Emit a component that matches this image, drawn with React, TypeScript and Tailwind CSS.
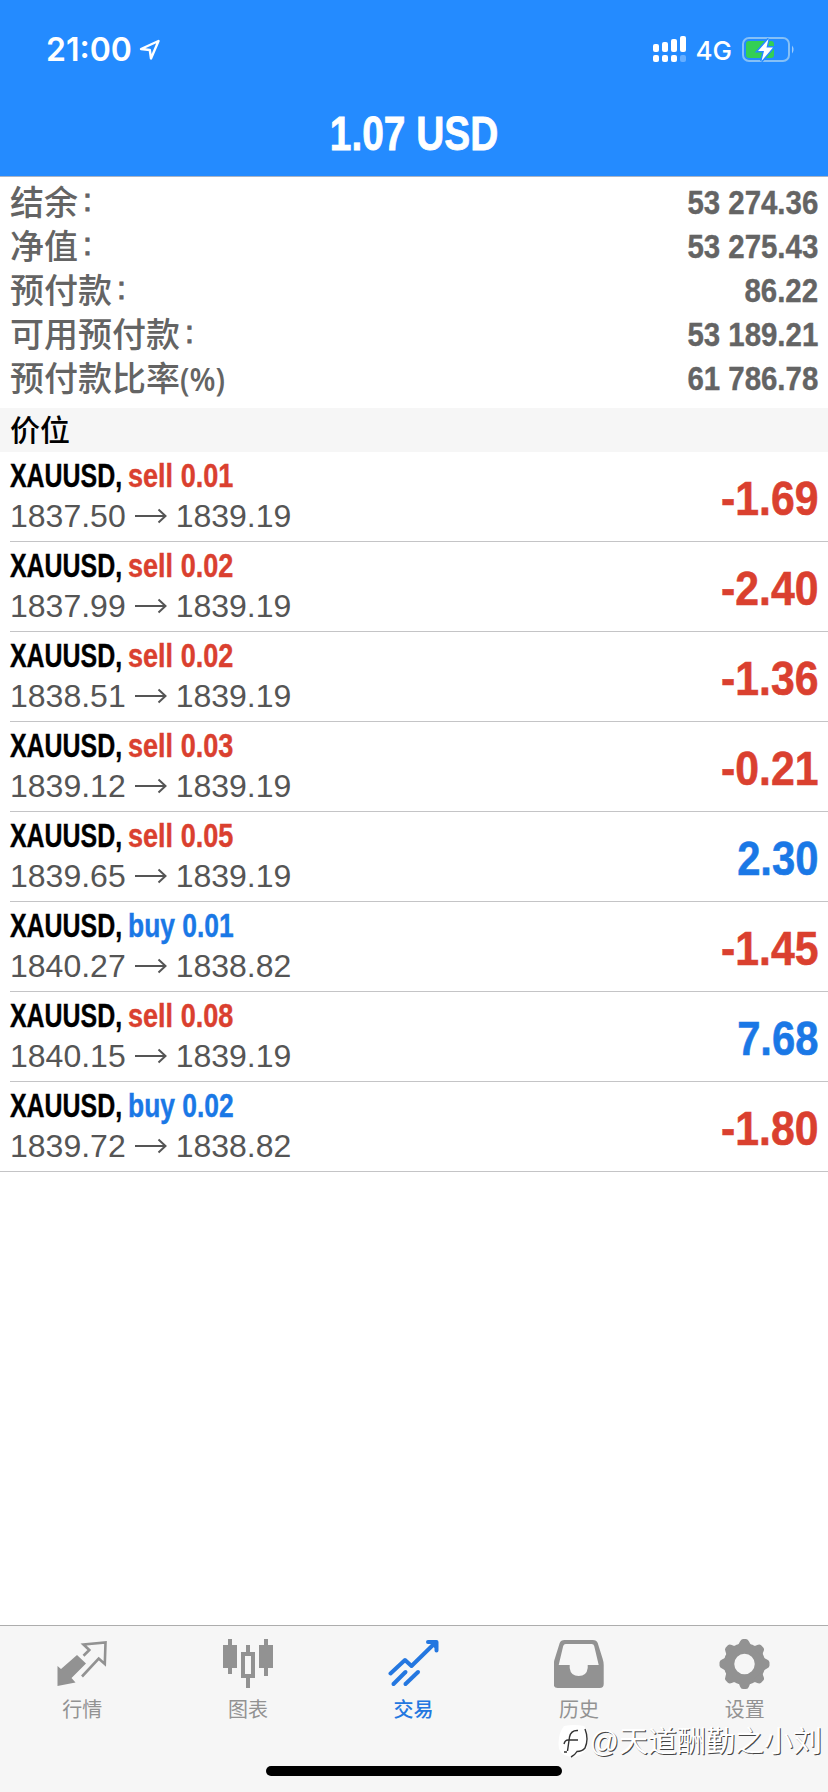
import type { ReactNode } from 'react';
import clsx from 'clsx';

const SUMMARY = [
  { label: '结余', suffix: ':', value: '53 274.36' },
  { label: '净值', suffix: ':', value: '53 275.43' },
  { label: '预付款', suffix: ':', value: '86.22' },
  { label: '可用预付款', suffix: ':', value: '53 189.21' },
  { label: '预付款比率', suffix: '(%)', value: '61 786.78' },
];

const POSITIONS = [
  { side: 'sell', volume: '0.01', open: '1837.50', current: '1839.19', profit: '-1.69' },
  { side: 'sell', volume: '0.02', open: '1837.99', current: '1839.19', profit: '-2.40' },
  { side: 'sell', volume: '0.02', open: '1838.51', current: '1839.19', profit: '-1.36' },
  { side: 'sell', volume: '0.03', open: '1839.12', current: '1839.19', profit: '-0.21' },
  { side: 'sell', volume: '0.05', open: '1839.65', current: '1839.19', profit: '2.30' },
  { side: 'buy', volume: '0.01', open: '1840.27', current: '1838.82', profit: '-1.45' },
  { side: 'sell', volume: '0.08', open: '1840.15', current: '1839.19', profit: '7.68' },
  { side: 'buy', volume: '0.02', open: '1839.72', current: '1838.82', profit: '-1.80' },
];

const RED = 'text-[#da402f]';
const BLUE = 'text-[#1a78e6]';

export default function App() {
  return (
    <div className="flex h-[1792px] w-[828px] flex-col overflow-hidden bg-white font-['Liberation_Sans','Noto_Sans_CJK_SC',sans-serif]">
      <header className="flex h-[177px] shrink-0 flex-col border-b border-[#a9b4c6] bg-[#248bff] text-white">
        <StatusBar />
        <h1 className="flex flex-1 justify-center pt-[9px] text-[48px] leading-[54px] font-bold">
          <span className="scale-x-[0.81] whitespace-nowrap [-webkit-text-stroke:0.8px_currentColor]">
            1.07 USD
          </span>
        </h1>
      </header>

      <section className="h-[231px] shrink-0 px-[10px] pt-[3px] text-[#646464]">
        {SUMMARY.map((row) => (
          <div key={row.label} className="flex h-[44px] items-center justify-between">
            <span className="flex items-center pt-[2px] text-[34px] leading-[44px] font-medium">
              {row.label}
              {row.suffix === ':' ? (
                <span className="ml-[5px] -translate-y-[3px] text-[32px] [-webkit-text-stroke:1px_currentColor]">
                  :
                </span>
              ) : (
                <span className="origin-left scale-x-[0.94] font-['Open_Sans',sans-serif] text-[32px] leading-[40px] font-semibold">
                  {row.suffix}
                </span>
              )}
            </span>
            <span className="origin-right scale-x-[0.865] text-[34px] leading-[44px] font-bold [-webkit-text-stroke:0.4px_currentColor]">
              {row.value}
            </span>
          </div>
        ))}
      </section>

      <h2 className="h-[44px] shrink-0 bg-[#f6f6f6] pl-[10px] text-[30px] leading-[46px] font-medium text-black">
        价位
      </h2>

      <main className="flex-1">
        {POSITIONS.map((p, i) => (
          <PositionRow key={i} position={p} last={i === POSITIONS.length - 1} />
        ))}
      </main>

      <TabBar />
    </div>
  );
}

function StatusBar() {
  return (
    <div className="flex h-[98px] items-center justify-between pt-[2px] pr-[32px] pl-[46px]">
      <div className="flex items-center">
        <span className="font-['Inter',sans-serif] text-[32px] font-semibold">21:00</span>
        <svg className="ml-[7px] h-[22px] w-[22px]" viewBox="0 0 22 22" fill="none">
          <path
            d="M2 10 L19.5 2 L12 19.5 L10.8 11 Z"
            stroke="white"
            strokeWidth="2.4"
            strokeLinejoin="round"
          />
        </svg>
      </div>
      <div className="flex items-center">
        {/* dual-SIM signal */}
        <svg className="mb-[3px] h-[28px] w-[34px]" viewBox="0 0 34 28" fill="white">
          <rect x="0" y="9" width="6" height="8" rx="2" />
          <rect x="9" y="7" width="6" height="10" rx="2" />
          <rect x="18" y="4" width="6" height="13" rx="2" />
          <rect x="27" y="1" width="6" height="16" rx="2" />
          <rect x="0" y="20" width="6" height="7" rx="2" />
          <rect x="9" y="20" width="6" height="7" rx="2" />
          <rect x="18" y="20" width="6" height="7" rx="2" />
          <rect x="27" y="20" width="6" height="7" rx="2" opacity="0.3" />
        </svg>
        <span className="ml-[9px] font-['Inter',sans-serif] text-[26px] font-medium">4G</span>
        <svg className="mb-[2px] ml-[10px] h-[28px] w-[54px]" viewBox="0 0 54 28">
          <rect x="1" y="3" width="46" height="23" rx="6" fill="none" stroke="#86c0f6" strokeWidth="2" />
          <path d="M50 10.5 Q53 14.5 50 18.5 Z" fill="#9dcbfb" />
          <rect x="4" y="6" width="28" height="17" rx="3" fill="#33cf55" />
          <path
            d="M26.5 4 L16 16 H22 L19.5 26 L31 12.5 H24.5 Z"
            fill="white"
            stroke="#248bff"
            strokeWidth="3"
            paintOrder="stroke"
          />
        </svg>
      </div>
    </div>
  );
}

function PositionRow({ position: p, last }: { position: (typeof POSITIONS)[number]; last: boolean }) {
  return (
    <div className={clsx('h-[90px]', last ? 'border-b border-[#c4c4c6]' : 'pl-[10px]')}>
      <div
        className={clsx(
          'flex h-full items-center justify-between pr-[10px]',
          last ? 'pl-[10px]' : 'border-b border-[#c4c4c6]',
        )}
      >
        <div className="flex flex-col pb-[3px]">
          <div className="flex text-[33px] leading-[41px] font-bold whitespace-nowrap [-webkit-text-stroke:0.4px_currentColor]">
            <span className="w-[118px] text-black">
              <span className="inline-block origin-left scale-x-[0.755]">XAUUSD,</span>
            </span>
            <span
              className={clsx('origin-left', p.side === 'sell' ? `scale-x-[0.82] ${RED}` : `scale-x-[0.8] ${BLUE}`)}
            >
              {p.side} {p.volume}
            </span>
          </div>
          <div className="flex items-center text-[32px] leading-[40px] text-[#555555]">
            {p.open}
            <svg className="mx-[9px] h-[16px] w-[32px]" viewBox="0 0 32 16" fill="none">
              <path d="M0 8 H30 M23.5 1.5 L30.5 8 L23.5 14.5" stroke="#555555" strokeWidth="2" />
            </svg>
            {p.current}
          </div>
        </div>
        <span
          className={clsx(
            'origin-right pt-[4px] text-[48px] leading-[56px] font-bold [-webkit-text-stroke:0.6px_currentColor]',
            p.profit.startsWith('-') ? `scale-x-[0.89] ${RED}` : `scale-x-[0.87] ${BLUE}`,
          )}
        >
          {p.profit}
        </span>
      </div>
    </div>
  );
}

function Tab({ label, active, children }: { label: string; active?: boolean; children: ReactNode }) {
  return (
    <div
      className={clsx(
        'flex flex-1 flex-col items-center pt-[12px]',
        active ? 'text-[#2477e0]' : 'text-[#929292]',
      )}
    >
      <svg className="h-[52px] w-[52px]" viewBox="0 0 52 52" fill="currentColor">
        {children}
      </svg>
      <span className={clsx('mt-[6px] pr-[1px] text-[20px] leading-[28px]', active && 'font-medium')}>
        {label}
      </span>
    </div>
  );
}

function TabBar() {
  return (
    <nav className="relative flex h-[167px] shrink-0 flex-col items-center border-t border-[#adadad] bg-[#f6f6f6]">
      <div className="flex w-full">
        <Tab label="行情">
          <path d="M0.5 28 L4 31 L20 17 L29 25.5 L14.5 40 L18.5 44.5 L0.5 48 Z" />
          <path
            d="M26.5 17.7 L32.3 12 L26.5 6.5 L48.5 4.5 L47.8 26 L41.7 20.5 L25 38.5"
            fill="none"
            stroke="currentColor"
            strokeWidth="2.6"
          />
        </Tab>
        <Tab label="图表">
          <path d="M6 1 h4 v6 h5 v23 h-5 v6 h-4 v-6 h-5 v-23 h5z" />
          <path d="M42 1 h4 v6 h5 v23 h-5 v8 h-4 v-8 h-5 v-23 h5z" />
          <path d="M24 7 h4 v7 h5 v26 h-5 v10 h-4 v-10 h-5 v-26 h5z M23 18 v18 h6 v-18z" fillRule="evenodd" />
        </Tab>
        <Tab label="交易" active>
          <g fill="none" stroke="currentColor" strokeWidth="4" strokeLinecap="round" strokeLinejoin="round">
            <path d="M2.5 35.5 L17 22 L23.5 28 L47 5" />
            <path d="M40 4 H48.5 V12.5" />
            <path d="M44 4.5 L48 8.5" />
            <path d="M5.5 46 L17.5 34" />
            <path d="M17.5 46 L30 34" />
          </g>
        </Tab>
        <Tab label="历史">
          <path
            d="M12 2 H40 Q44 2 45 5 L50 21 Q51 24 51 27 V46 Q51 50 47 50 H5 Q1 50 1 46 V27 Q1 24 2 21 L7 5 Q8 2 12 2 Z M13 6 Q11 6 10.5 8 L6 27 H17 V30 Q18 38 26 38 Q34 38 35 30 V27 H46 L41.5 8 Q41 6 39 6 Z"
            fillRule="evenodd"
            transform="translate(-1.3 0)"
          />
        </Tab>
        <Tab label="设置">
          <circle cx="25.5" cy="26" r="15.5" fill="none" stroke="currentColor" strokeWidth="10.5" />
          {[0, 45, 90, 135, 180, 225, 270, 315].map((angle) => (
            <path
              key={angle}
              d="M16.5 8.5 Q20 7 21 3.5 Q22 1 24 1 H27 Q29 1 30 3.5 Q31 7 34.5 8.5 Z"
              transform={`rotate(${angle} 25.5 26)`}
            />
          ))}
        </Tab>
      </div>
      <div className="absolute bottom-[16px] left-[266px] h-[10px] w-[296px] rounded-full bg-black" />
      <Watermark />
    </nav>
  );
}

function Watermark() {
  return (
    <div className="absolute right-[6px] bottom-[33px] flex items-center text-white">
      <svg className="h-[34px] w-[32px]" viewBox="0 0 32 34" fill="none">
        <path d="M6 1 Q16 -1 26 1 Q31 6 30 18 Q29 28 17 32 Q4 32 1 24 Q-1 10 6 1 Z" fill="white" />
        <path
          d="M20 5.5 Q13 5 11.5 12 L9.5 26 M6 19 Q7 15 10 15 H20 M6 27 H9 M27 4 Q31 14 27 23 Q24 26.5 19 26.5 Q17 30 13 32"
          stroke="#333"
          strokeWidth="1.4"
        />
      </svg>
      <span className="text-[29px] leading-[34px] whitespace-nowrap [text-shadow:1px_1px_0_#444]">
        @天道酬勤之小刘
      </span>
    </div>
  );
}
